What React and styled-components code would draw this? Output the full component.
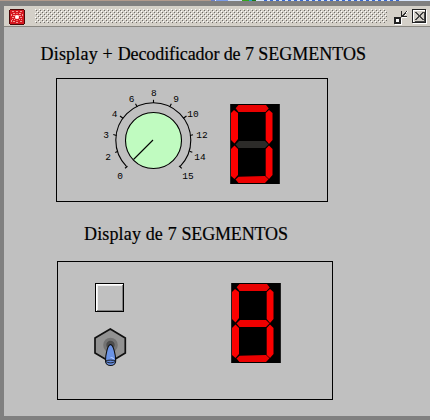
import React from "react";
import styled, { createGlobalStyle } from "styled-components";

const GlobalStyle = createGlobalStyle`
  * { box-sizing: border-box; }
  body { margin: 0; overflow: hidden; background: #808080; }
  svg { display: block; }
`;

const Screen = styled.div`
  width: 430px;
  height: 420px;
  display: flex;
  flex-direction: column;
  background: #808080;
`;

const Desktop = styled.div`
  height: 1px;
  flex: none;
  display: flex;
`;

const Strip = styled.div`
  width: ${(p) => p.$w}px;
  background: ${(p) => p.$color};
`;

const Frame = styled.div`
  flex: 1;
  padding: 5px 0 4px 4px;
  display: flex;
  flex-direction: column;
`;

const TitleBar = styled.header`
  height: 21px;
  flex: none;
  display: flex;
  align-items: flex-start;
  background: #d4d0c8;
  border-bottom: 1px solid #888680;
  padding: 3px 3px 0 5px;
`;

const Grip = styled.div`
  width: 352px;
  height: 14px;
  margin-left: 10px;
  margin-right: 7px;
`;

const CloseSlot = styled.div`
  margin-left: 4px;
`;

const Content = styled.main`
  flex: 1;
  background: #c0c0c0;
  display: flex;
  flex-direction: column;
  align-items: flex-start;
`;

const Heading = styled.h1`
  margin: ${(p) => p.$top}px 0 0 ${(p) => p.$left}px;
  height: 24px;
  font: 400 18px/24px "Liberation Serif", serif;
  color: #000;
  -webkit-text-stroke: 0.2px #000;
  white-space: nowrap;
`;

const Word = styled.span`
  letter-spacing: ${(p) => p.$spacing}px;
`;

const Panel = styled.section`
  width: ${(p) => p.$w}px;
  height: ${(p) => p.$h}px;
  margin: ${(p) => p.$top}px 0 0 ${(p) => p.$left}px;
  border: 1px solid #000;
  display: flex;
  align-items: flex-start;
`;

const DialSvg = styled.svg`
  margin: 6px 0 0 43px;
  font: 9.5px "Liberation Mono", monospace;
`;

const DigitSvg = styled.svg`
  margin: ${(p) => p.$top}px 0 0 ${(p) => p.$left}px;
`;

const Controls = styled.div`
  display: flex;
  flex-direction: column;
  align-items: flex-start;
  width: 40px;
  margin: 21px 0 0 35px;
`;

const PushButton = styled.button`
  width: 29px;
  height: 29px;
  margin-left: 2px;
  padding: 0;
  border: 1px solid #000;
  border-radius: 0;
  background: #c0c0c0;
  box-shadow: inset 1px 1px 0 #fff, inset -1px -1px 0 #808080, inset 2px 2px 0 #eee;
`;

const ToggleSvg = styled.svg`
  margin-top: 15px;
`;

const desktopStrips = [
  [211, "#b19a8c"], [4, "#6b7fc8"], [1, "#e8eefc"], [12, "#7c9ce8"], [14, "#d0def4"],
  [7, "#35a51d"], [3, "#20a8c8"], [4, "#187818"], [8, "#d8e6fc"],
  ...Array.from({ length: 23 }, () => [[3, "#3868d0"], [3, "#d8e6fc"]]).flat(),
  [28, "#d8e6fc"],
];

const labels = [
  [0, 120, 179], [2, 108, 160], [3, 106, 138], [4, 114.5, 117], [6, 131.7, 102],
  [8, 153.8, 96], [9, 176, 102], [10, 193, 117], [12, 202, 138], [14, 200, 160], [15, 188, 179],
];

const marks = [
  [127.5, 166.3, 125, 168.3], [117.5, 151.5, 115.2, 152.5], [116.5, 135.5, 113.3, 134.5],
  [123, 118.3, 120, 116], [137.3, 107, 135.5, 103.8], [153.5, 103, 153.5, 99.8],
  [169.7, 107, 171.3, 103.8], [183.3, 118.3, 186.5, 116], [190, 135.5, 193, 134.7],
  [189.5, 151.3, 192.3, 152.3], [179, 165.8, 181.8, 168.3],
];

function Dial() {
  return (
    <DialSvg width="116" height="100" viewBox="100 85 116 100">
      <path d="M126.6 166.6A37.5 37.5 0 1 1 180 166.6" fill="none" stroke="#000" strokeWidth="1.1" />
      {marks.map(([a, b, c, d]) => (
        <line key={`${a}-${b}`} x1={a} y1={b} x2={c} y2={d} stroke="#000" strokeWidth="1.1" />
      ))}
      <circle cx="153.5" cy="140.5" r="28" fill="#c0fbc0" stroke="#000" strokeWidth="1.1" />
      <path d="M153 140L133.5 159.5" stroke="#000" strokeWidth="1.1" />
      {labels.map(([t, x, y]) => (
        <text key={t} x={x} y={y} textAnchor="middle">{t}</text>
      ))}
    </DialSvg>
  );
}

const segments = [
  ["a", "5.7,4.2 8.5,1 36,1 38.7,4.5 35.5,8 8.5,8", "#e90000"],
  ["f", "1,9 4,6 8,9 8,35 4.5,39.5 1,36", "#fb0000"],
  ["b", "35.7,9 39,6 42.5,9 42.5,36 39,40 35.7,36", "#fb0000"],
  ["g", "5.5,40.5 9,37 35,37 38.5,40.5 35,44 8.5,44", "#ef0000"],
  ["e", "1,45 4.5,41.5 8,45 8,71 4.5,75 1,72", "#fb0000"],
  ["c", "35.7,45 39,41.5 42.5,45 42.5,71 39,75 35.7,72", "#fb0000"],
  ["d", "5.5,75.5 8.5,72.7 35,72 38.5,75.3 35,79 8.5,79", "#ed0000"],
];

function Digit({ lit, left, top }) {
  return (
    <DigitSvg $left={left} $top={top} width="50" height="80" viewBox="0 0 50 80">
      <rect width="50" height="80" fill="#000" />
      <path d="M.5 0V80M49.5 0V80" stroke="#222" />
      {segments.map(([id, points, color]) => (
        <polygon key={id} points={points} fill={lit.includes(id) ? color : "#2c2b29"} />
      ))}
    </DigitSvg>
  );
}

function AppIcon() {
  return (
    <svg width="16" height="16" viewBox="0 0 16 16" shapeRendering="crispEdges">
      <path d="M1 0H15V1H16V15H15V16H1V15H0V1H1Z" fill="#4a0808" />
      <rect x="1" y="1" width="14" height="14" fill="#d51820" />
      <path d="M3 2h2v1h-2zM7 2h2v1h-2zM11 2h2v1h-2zM2 5h1v2h-1zM4 4h2v1h-2zM10 4h2v1h-2zM13 5h1v2h-1zM5 6h1v1h-1zM10 6h1v1h-1zM3 8h2v1h-2zM11 8h2v1h-2zM5 10h1v1h-1zM10 10h1v1h-1zM2 11h1v2h-1zM4 12h2v1h-2zM7 13h2v1h-2zM11 12h2v1h-2zM4 6h1v1h-1zM12 10h1v1h-1zM3 10h1v1h-1zM11 6h1v1h-1z" fill="#f39a94" />
      <rect x="6" y="6" width="4" height="4" fill="#ff8a88" />
      <rect x="7" y="7" width="2" height="2" fill="#fff" />
      <path d="M7 6h2v1h-2zM7 9h2v1h-2zM6 7h1v2h-1zM9 7h1v2h-1z" fill="#ffd8d4" />
      <path d="M7 4h2v1h-2zM7 11h2v1h-2z" fill="#ff5a58" />
    </svg>
  );
}

function GripTexture() {
  return (
    <svg width="352" height="14" shapeRendering="crispEdges">
      <defs>
        <pattern id="bumps" width="4" height="4" patternUnits="userSpaceOnUse">
          <path d="M0 0h1v1h-1zM2 2h1v1h-1z" fill="#fff" />
          <path d="M1 1h1v1h-1zM3 3h1v1h-1z" fill="#6c6a66" />
        </pattern>
      </defs>
      <rect width="352" height="14" fill="url(#bumps)" />
    </svg>
  );
}

function MinimizeIcon() {
  return (
    <svg width="14" height="16" viewBox="0 0 14 16" shapeRendering="crispEdges">
      <path d="M1 9H8V16H1Z" fill="#fff" />
      <path d="M0 8H7V15H0Z" fill="#222" />
      <path d="M2 10H5V13H2Z" fill="#fff" />
      <path d="M8 8h5v1h-5zM13 2h1v1h-1zM12 3h1v1h-1zM11 5h1v1h-1z" fill="#fff" />
      <path d="M7 2h1v5h5v1h-6z" fill="#222" />
      <path d="M8 6h2v1h-2zM9 5h2v1h-2zM10 4h2v1h-2zM11 3h1v1h-1zM12 2h1v1h-1z" fill="#333" />
    </svg>
  );
}

function CloseIcon() {
  return (
    <svg width="15" height="15" viewBox="0 0 15 15" shapeRendering="crispEdges">
      <path d="M1 1h14v14h-14z" fill="#fff" />
      <path d="M0 0h14v14h-14z" fill="#222" />
      <path d="M1 1h12v12h-12z" fill="#d4d0c8" />
      <path d="M1 1h12v1h-11v11h-1z" fill="#fff" />
      <path d="M12 3h1v10h-10v-1h9z" fill="#444" />
      <path d="M3 3h2v1h1v1h1v1h1v-1h1v-1h1v-1h2v1h-1v1h-1v1h-1v2h1v1h1v1h1v1h-2v-1h-1v-1h-1v-1h-1v1h-1v1h-1v1h-2v-1h1v-1h1v-1h1v-2h-1v-1h-1v-1h-1z" fill="#444" />
    </svg>
  );
}

function Toggle() {
  return (
    <ToggleSvg width="34" height="40" viewBox="93 327 34 40">
      <polygon points="110.3,329 125.3,338 125.3,353 110.3,362 95,353 95,338" fill="#929292" stroke="#111" strokeWidth="1.7" />
      <circle cx="110.5" cy="345" r="7.3" fill="#737373" />
      <circle cx="110.5" cy="345" r="4.2" fill="#4c4c4c" />
      <path d="M110.5 344.5C107.5 345 105.5 355 105.5 361C105.5 367 115.7 367 115.7 361C115.7 355 113.5 345 110.5 344.5Z" fill="#6b93e5" stroke="#111" strokeWidth="1.1" />
      <path d="M105.5 361C108 359.8 113 359.8 115.7 361C113 363.5 108 363.5 105.5 361Z" fill="#648bdc" stroke="#111" strokeWidth=".9" />
      <path d="M110.5 357.5h2v1h1.5" stroke="#a9c5fa" fill="none" />
    </ToggleSvg>
  );
}

export default function App() {
  return (
    <>
      <GlobalStyle />
      <Screen>
        <Desktop>
          {desktopStrips.map(([w, color], i) => <Strip key={i} $w={w} $color={color} />)}
        </Desktop>
        <Frame>
          <TitleBar>
            <AppIcon />
            <Grip><GripTexture /></Grip>
            <MinimizeIcon />
            <CloseSlot><CloseIcon /></CloseSlot>
          </TitleBar>
          <Content>
            <Heading $top={15} $left={36.5}>
              <Word $spacing={0.2}>Display + </Word>
              <Word $spacing={-0.1}>Decodificador de 7 </Word>
              <Word $spacing={0}>SEGMENTOS</Word>
            </Heading>
            <Panel $w={272} $h={124} $top={12} $left={52}>
              <Dial />
              <Digit lit="abcdef" left={14} top={25} />
            </Panel>
            <Heading $top={20} $left={80}>
              <Word $spacing={0.15}>Display de 7 </Word>
              <Word $spacing={-0.15}>SEGMENTOS</Word>
            </Heading>
            <Panel $w={276} $h={139} $top={15} $left={53}>
              <Controls>
                <PushButton aria-label="Pulsador" />
                <Toggle />
              </Controls>
              <Digit lit="abcdefg" left={98} top={21} />
            </Panel>
          </Content>
        </Frame>
      </Screen>
    </>
  );
}
